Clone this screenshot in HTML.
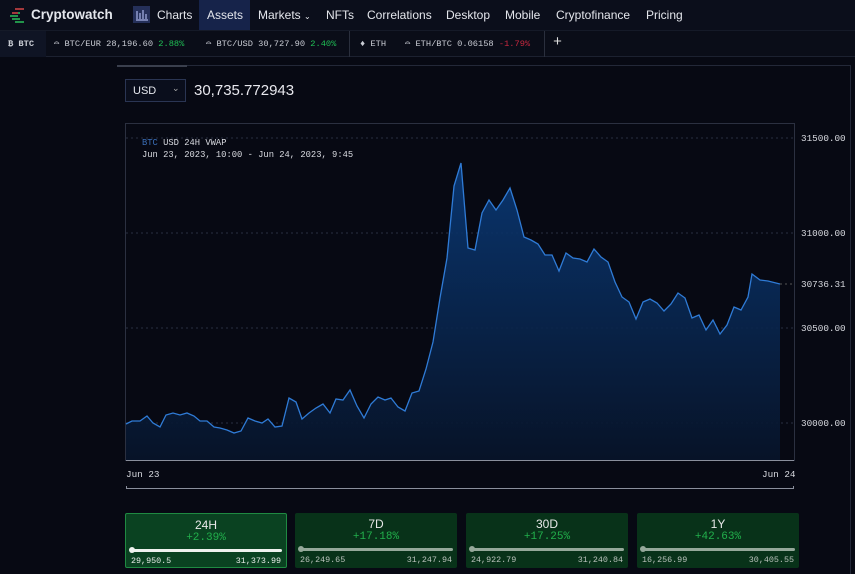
<!DOCTYPE html>
<html><head><meta charset="utf-8"><style>
*{margin:0;padding:0;box-sizing:border-box}
body{width:855px;height:574px;background:#070913;font-family:"Liberation Sans",sans-serif;color:#e6e8ee;position:relative;overflow:hidden}
.nav{position:absolute;left:0;top:0;width:855px;height:30px;background:#0b0e1b}
.nav span{position:absolute;top:8px;font-size:12px;color:#e4e6ec}
.tick{position:absolute;left:0;top:30px;width:855px;height:27px;background:#0a0d18;border-top:1px solid #151a28;border-bottom:1px solid #1c2130}
.tick span{position:absolute;top:8px;font-size:8.7px;color:#c9ccd4;font-family:"Liberation Mono",monospace;white-space:nowrap}
.g{color:#1fbf55!important}.r{color:#c8283f!important}
.card{position:absolute;top:513px;width:162px;height:55px;background:#083219;border-radius:2px}
.card .t{position:absolute;top:4px;width:100%;text-align:center;font-size:12px;color:#e8e8e8}
.card .p{position:absolute;top:18px;width:100%;text-align:center;font-size:11px;color:#22b04c;font-family:"Liberation Mono",monospace}
.card .bar{position:absolute;left:4px;right:4px;top:35px;height:3px;background:#95a89a;border-radius:2px}
.card .bar:before{content:"";position:absolute;left:-1px;top:-2px;width:6px;height:6px;border-radius:3px;background:inherit}
.card .a,.card .b{position:absolute;top:42px;font-size:8.4px;font-family:"Liberation Mono",monospace;color:#b9c2bb}
.card .a{left:5px}.card .b{right:5px}
.ax{position:absolute;font-size:9.3px;font-family:"Liberation Mono",monospace;color:#d8dae0;white-space:nowrap}
</style></head><body>
<div class="nav">
<svg style="position:absolute;left:9px;top:8px" width="18" height="15"><path d="M6 1h9M3 5h8M1 8h8M3 11h8M6 14h9" stroke="#2bbf5a" stroke-width="1.6"/><path d="M6 1h9M3 5h6" stroke="#d2283c" stroke-width="1.6"/></svg>
<span style="left:31px;font-weight:bold;font-size:13.5px;top:7px">Cryptowatch</span>
<div style="position:absolute;left:133px;top:6px;width:17px;height:17px;background:#25305a"></div>
<svg style="position:absolute;left:135px;top:8px" width="13" height="13"><path d="M2 3v8M5 5v6M8 2v9M11 6v5M1 12h12" stroke="#aab4e8" stroke-width="1.2"/></svg>
<span style="left:157px">Charts</span>
<div style="position:absolute;left:199px;top:0;width:51px;height:30px;background:#16234a"></div>
<span style="left:207px">Assets</span>
<span style="left:258px">Markets <small style="font-size:8px">⌄</small></span>
<span style="left:326px">NFTs</span>
<span style="left:367px">Correlations</span>
<span style="left:446px">Desktop</span>
<span style="left:505px">Mobile</span>
<span style="left:556px">Cryptofinance</span>
<span style="left:646px">Pricing</span>
</div>
<div class="tick">
<div style="position:absolute;left:0;top:0;width:46px;height:26px;background:#0f1424"></div>
<span style="left:8px;font-weight:bold">₿ BTC</span>
<span style="left:54px">⌓ BTC/EUR 28,196.60 <b class="g" style="font-weight:normal">2.88%</b></span>
<span style="left:206px">⌓ BTC/USD 30,727.90 <b class="g" style="font-weight:normal">2.40%</b></span>
<div style="position:absolute;left:349px;top:0;width:1px;height:26px;background:#2a2f3d"></div>
<span style="left:360px">♦ ETH</span>
<span style="left:405px">⌓ ETH/BTC 0.06158 <b class="r" style="font-weight:normal">-1.79%</b></span>
<div style="position:absolute;left:544px;top:0;width:1px;height:26px;background:#2a2f3d"></div>
<span style="left:553px;font-size:15px;top:3px;color:#ddd">+</span>
</div>
<div style="position:absolute;left:117px;top:65px;width:734px;height:1px;background:#232838"></div>
<div style="position:absolute;left:117px;top:65px;width:70px;height:2px;background:#3a3f4d"></div>
<div style="position:absolute;left:850px;top:65px;width:1px;height:509px;background:#232838"></div>
<div style="position:absolute;left:125px;top:79px;width:61px;height:23px;border:1px solid #2a3553;background:#0a0e1c;font-size:11px;padding:5px 0 0 7px">USD<span style="position:absolute;left:46px;top:3px;font-size:9px;color:#aaa">⌄</span></div>
<div style="position:absolute;left:194px;top:82px;font-size:15px;color:#e8e8ee">30,735.772943</div>
<svg style="position:absolute;left:0;top:0" width="855" height="574">
<defs><linearGradient id="f" x1="0" y1="0" x2="0" y2="1"><stop offset="0" stop-color="#0a3a78"/><stop offset="1" stop-color="#07142a"/></linearGradient></defs>
<rect x="125.5" y="123.5" width="669" height="337" fill="none" stroke="#2b3040"/>
<g stroke="#2a3040" stroke-dasharray="2,3"><line x1="126" y1="138" x2="794" y2="138"/><line x1="126" y1="233" x2="794" y2="233"/><line x1="126" y1="328" x2="794" y2="328"/><line x1="126" y1="423" x2="794" y2="423"/><line x1="780" y1="284" x2="794" y2="284" stroke="#555"/></g>
<path d="M126,424 132,421 140,421 147,416 153,423 160,427 166,415 173,413 180,415 187,413 194,416 200,421 207,421 214,427 220,428 227,430 234,433 241,431 248,418 255,421 262,423 268,419 275,427 282,426 289,398 296,402 302,419 309,413 316,408 323,404 330,413 336,399 343,400 350,390 357,406 364,418 371,404 378,397 385,400 391,398 398,407 405,411 412,393 419,391 426,369 433,342 440,298 447,258 454,186 461,163 468,248 475,250 482,213 489,200 496,210 503,200 510,188 517,210 524,237 531,240 538,244 545,255 552,255 559,271 566,253 573,258 580,259 587,262 594,249 601,257 608,262 615,282 622,297 629,302 636,319 643,302 650,299 657,303 664,311 671,304 678,293 685,298 692,318 699,315 706,330 713,320 720,334 727,325 734,307 741,310 748,297 752,274 760,280 768,281 780,284 780,460 126,460Z" fill="url(#f)" opacity=".9"/>
<path d="M126,424 132,421 140,421 147,416 153,423 160,427 166,415 173,413 180,415 187,413 194,416 200,421 207,421 214,427 220,428 227,430 234,433 241,431 248,418 255,421 262,423 268,419 275,427 282,426 289,398 296,402 302,419 309,413 316,408 323,404 330,413 336,399 343,400 350,390 357,406 364,418 371,404 378,397 385,400 391,398 398,407 405,411 412,393 419,391 426,369 433,342 440,298 447,258 454,186 461,163 468,248 475,250 482,213 489,200 496,210 503,200 510,188 517,210 524,237 531,240 538,244 545,255 552,255 559,271 566,253 573,258 580,259 587,262 594,249 601,257 608,262 615,282 622,297 629,302 636,319 643,302 650,299 657,303 664,311 671,304 678,293 685,298 692,318 699,315 706,330 713,320 720,334 727,325 734,307 741,310 748,297 752,274 760,280 768,281 780,284" fill="none" stroke="#2f7bd6" stroke-width="1.3"/>
<line x1="126" y1="460.5" x2="794" y2="460.5" stroke="#8a8f9c"/>
<line x1="126" y1="488.5" x2="793" y2="488.5" stroke="#8a8f9c"/>
<line x1="126.5" y1="486" x2="126.5" y2="489" stroke="#8a8f9c"/><line x1="793.5" y1="486" x2="793.5" y2="489" stroke="#8a8f9c"/>
</svg>
<div class="ax" style="left:142px;top:138px;font-size:8.8px"><span style="color:#3a6db5">BTC</span> USD 24H VWAP</div>
<div class="ax" style="left:142px;top:150px;font-size:8.8px">Jun 23, 2023, 10:00 - Jun 24, 2023, 9:45</div>
<div class="ax" style="left:801px;top:133px">31500.00</div>
<div class="ax" style="left:801px;top:228px">31000.00</div>
<div class="ax" style="left:801px;top:279px">30736.31</div>
<div class="ax" style="left:801px;top:323px">30500.00</div>
<div class="ax" style="left:801px;top:418px">30000.00</div>
<div class="ax" style="left:126px;top:469px">Jun 23</div>
<div class="ax" style="left:762px;top:469px">Jun 24</div>
<div class="card" style="left:125px;border:1px solid #1f8a42;background:#0a4221"><div class="t">24H</div><div class="p">+2.39%</div><div class="bar" style="background:#eef2ee"></div><div class="a" style="color:#e8ece8">29,950.5</div><div class="b" style="color:#e8ece8">31,373.99</div></div>
<div class="card" style="left:295px"><div class="t">7D</div><div class="p">+17.18%</div><div class="bar"></div><div class="a">26,249.65</div><div class="b">31,247.94</div></div>
<div class="card" style="left:466px"><div class="t">30D</div><div class="p">+17.25%</div><div class="bar"></div><div class="a">24,922.79</div><div class="b">31,240.84</div></div>
<div class="card" style="left:637px"><div class="t">1Y</div><div class="p">+42.63%</div><div class="bar"></div><div class="a">16,256.99</div><div class="b">30,405.55</div></div>
</body></html>
